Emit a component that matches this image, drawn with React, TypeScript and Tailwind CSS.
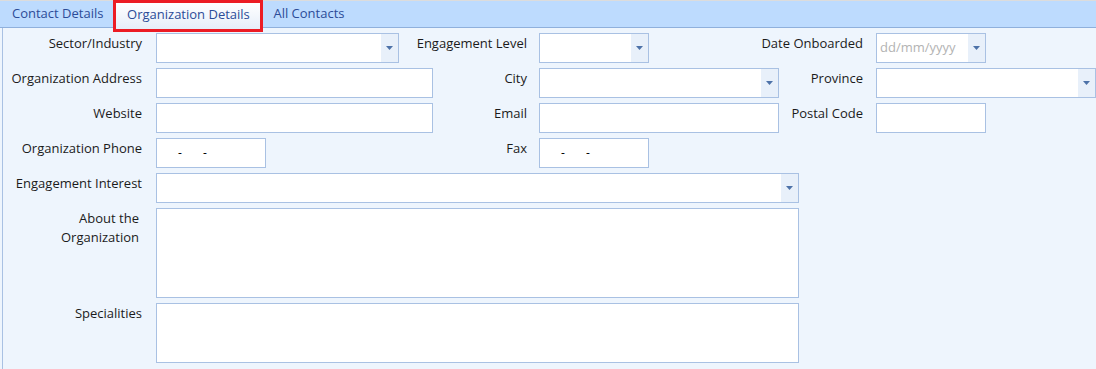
import React from 'react';

const font = { fontFamily: '"Open Sans", "Liberation Sans", sans-serif' };

const Arrow: React.FC = () => (
  <div className="flex h-full w-[17px] items-center justify-center bg-[#e8f0fa]">
    <svg width="7" height="4" viewBox="0 0 7 4">
      <path d="M0 0h7L3.5 4z" fill="#4d72a8" />
    </svg>
  </div>
);

interface BoxProps {
  width: string;
  height?: string;
  combo?: boolean;
  children?: React.ReactNode;
}

const Box: React.FC<BoxProps> = ({ width, height = 'h-[30px]', combo, children }) => (
  <div className={`flex ${width} ${height} border border-[#a9c1e3] bg-white`}>
    <div className="flex flex-1 items-center overflow-hidden">{children}</div>
    {combo && <Arrow />}
  </div>
);

// labels are right-aligned and may spill to the left of their column
const Label: React.FC<{ w: string; children: React.ReactNode }> = ({ w, children }) => (
  <div className={`${w} flex shrink-0 justify-end pt-[1px] text-[13px] leading-[19px] text-[#1b1b1b]`}>
    <div className="shrink-0 whitespace-nowrap text-right">{children}</div>
  </div>
);

const PhoneMask: React.FC = () => (
  <div className="flex w-full pl-[21px] text-[12px] text-black">
    <span className="w-[25px]">-</span>
    <span>-</span>
  </div>
);

export default function App() {
  return (
    <div className="h-[369px] w-[1096px] overflow-hidden bg-[#eef5fd]" style={font}>
      {/* tab strip */}
      <div className="relative flex h-[28px] items-end border-t border-b border-t-[#dcdcdc] border-b-[#8fb0dc] bg-[#bddbfe] text-[13px] text-[#2c4c98]">
        <div className="flex h-full items-center pl-[12px] pr-[10px]">Contact Details</div>
        <div className="relative z-10 -mb-[5px] flex h-[32px] w-[150px] items-center justify-center border-[3px] border-[#ec1c24] bg-gradient-to-b from-white to-[#e6eef9] pb-[3px]">
          Organization Details
        </div>
        <div className="flex h-full items-center pl-[10px]">All Contacts</div>
      </div>

      {/* form */}
      <div className="ml-[2px] flex h-[341px] flex-col gap-[5px] border-l border-[#a9c1e3] pt-[5px]">
        <div className="flex">
          <Label w="w-[139px]">Sector/Industry</Label>
          <div className="w-[291px] shrink-0 pl-[14px]"><Box width="w-[243px]" combo /></div>
          <Label w="w-[94px]">Engagement Level</Label>
          <div className="w-[252px] shrink-0 pl-[12px]"><Box width="w-[110px]" combo /></div>
          <Label w="w-[84px]">Date Onboarded</Label>
          <div className="pl-[13px]">
            <Box width="w-[110px]" combo>
              <span className="pl-[3px] text-[13px] text-[#b3b3b3]">dd/mm/yyyy</span>
            </Box>
          </div>
        </div>

        <div className="flex">
          <Label w="w-[139px]">Organization Address</Label>
          <div className="w-[291px] shrink-0 pl-[14px]"><Box width="w-[277px]" /></div>
          <Label w="w-[94px]">City</Label>
          <div className="w-[252px] shrink-0 pl-[12px]"><Box width="w-[240px]" combo /></div>
          <Label w="w-[84px]">Province</Label>
          <div className="pl-[13px]"><Box width="w-[220px]" combo /></div>
        </div>

        <div className="flex">
          <Label w="w-[139px]">Website</Label>
          <div className="w-[291px] shrink-0 pl-[14px]"><Box width="w-[277px]" /></div>
          <Label w="w-[94px]">Email</Label>
          <div className="w-[252px] shrink-0 pl-[12px]"><Box width="w-[240px]" /></div>
          <Label w="w-[84px]">Postal Code</Label>
          <div className="pl-[13px]"><Box width="w-[110px]" /></div>
        </div>

        <div className="flex">
          <Label w="w-[139px]">Organization Phone</Label>
          <div className="w-[291px] shrink-0 pl-[14px]"><Box width="w-[110px]"><PhoneMask /></Box></div>
          <Label w="w-[94px]">Fax</Label>
          <div className="w-[252px] shrink-0 pl-[12px]"><Box width="w-[110px]"><PhoneMask /></Box></div>
        </div>

        <div className="flex">
          <Label w="w-[139px]">Engagement Interest</Label>
          <div className="pl-[14px]"><Box width="w-[643px]" combo /></div>
        </div>

        <div className="flex">
          <Label w="w-[136px]">
            About the
            <br />
            Organization
          </Label>
          <div className="pl-[17px]"><Box width="w-[643px]" height="h-[90px]" /></div>
        </div>

        <div className="flex">
          <Label w="w-[139px]">Specialities</Label>
          <div className="pl-[14px]"><Box width="w-[643px]" height="h-[60px]" /></div>
        </div>
      </div>
    </div>
  );
}
